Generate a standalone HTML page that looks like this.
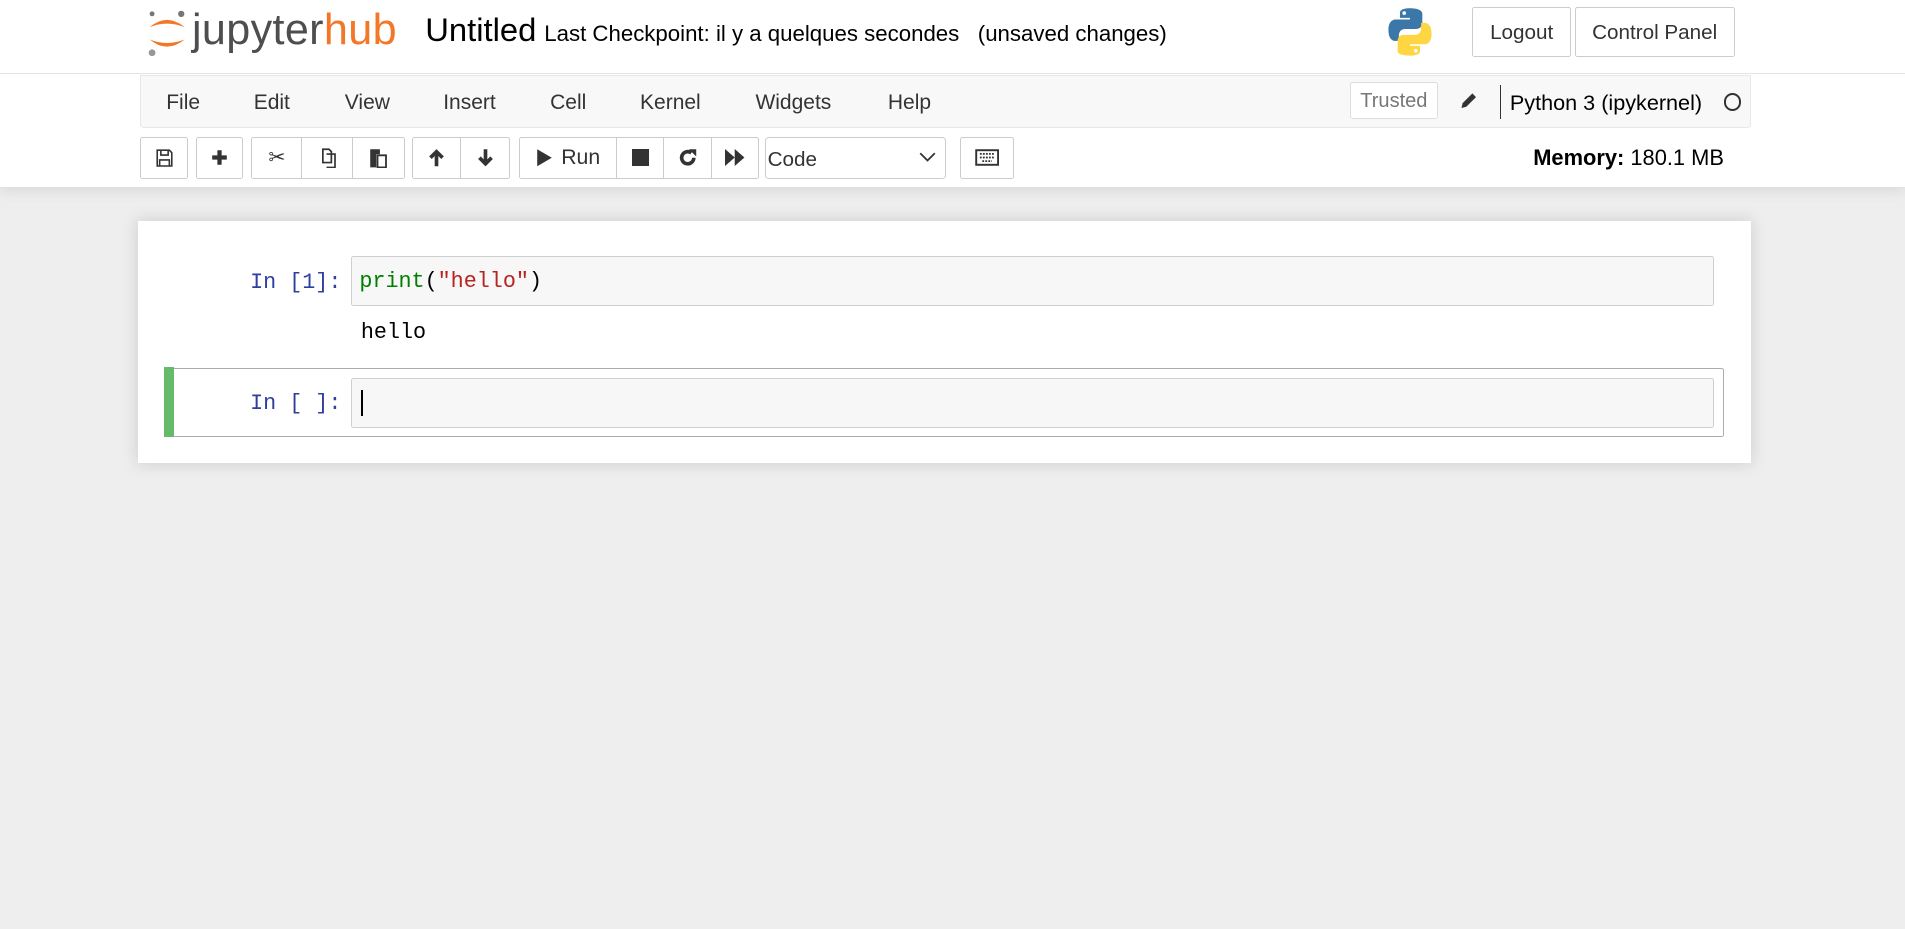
<!DOCTYPE html>
<html><head><meta charset="utf-8"><style>
html,body{margin:0;padding:0;background:#eee;overflow:hidden}
#w{zoom:1.2149;width:1568px;height:765px;position:relative;font-family:"Liberation Sans",Arial,sans-serif;color:#000}
.a{position:absolute}
#hdr{left:0;top:0;width:1568px;height:154px;background:#fff;box-shadow:0 0 12px 1px rgba(87,87,87,0.2)}
#hline{left:0;top:60px;width:1568px;height:1px;background:#e4e4e4}
.btn{position:absolute;border:1px solid #ccc;background:#fff;box-sizing:border-box;border-radius:2px}
.menu{left:115px;top:62px;width:1326px;height:43px;background:#f8f8f8;border:1px solid #e7e7e7;box-sizing:border-box;border-radius:0 0 3px 3px}
.mi{position:absolute;top:10px;font-size:17.3px;color:#333}
.tb{position:absolute;top:113px;height:34px;border:1px solid #ccc;box-sizing:border-box;background:#fff;border-radius:2px;display:flex;align-items:center;justify-content:center;color:#333}
.mono{font-family:"Liberation Mono","DejaVu Sans Mono",monospace;font-size:17.9px}
.inp{position:absolute;left:289px;width:1122px;height:41px;background:#f7f7f7;border:1px solid #cfcfcf;box-sizing:border-box;border-radius:2px}
.pr{position:absolute;color:#303f9f;width:172px;text-align:right;left:109px}
</style></head><body><div id="w">
<div id="hdr" class="a"></div>
<div id="hline" class="a"></div>
<svg class="a" style="left:120px;top:7px" width="36" height="40" viewBox="0 0 36 40">
<circle cx="5" cy="4" r="2" fill="#767677"/><circle cx="29" cy="4" r="2.6" fill="#767677"/><circle cx="5" cy="36" r="2.8" fill="#989798"/>
<path d="M3 15 Q17 3 32 15 Q17 9 3 15Z" fill="#f37726"/><path d="M3 25 Q17 37 32 25 Q17 31 3 25Z" fill="#f37726"/>
</svg>
<div class="a" style="left:158px;top:5px;font-size:35.5px;color:#4e4e4e;letter-spacing:0.3px">jupyter<span style="color:#f37726">hub</span></div>
<div class="a" style="left:350px;top:9px;font-size:27px">Untitled</div>
<div class="a" style="left:448px;top:17px;font-size:18.3px">Last Checkpoint: il y a quelques secondes &nbsp;&nbsp;(unsaved changes)</div>
<svg class="a" style="left:1141px;top:6px" width="40" height="41" viewBox="0 0 40 41">
<path d="M19.5 1C11 1 11.5 4.7 11.5 4.7V9h8.2v1.3H8.2S2 9.6 2 18.9s5.4 9 5.4 9h3.2v-4.4s-.2-5.4 5.3-5.4h8.9s5.1.1 5.1-5V5.7S30.7 1 19.5 1z" fill="#3b77a8"/>
<circle cx="15" cy="5" r="1.5" fill="#fff"/>
<path d="M20 40c8.5 0 8-3.7 8-3.7V32h-8.2v-1.3h11.5s6.2.7 6.2-8.6-5.4-9-5.4-9h-3.2v4.4s.2 5.4-5.3 5.4h-8.9s-5.1-.1-5.1 5v8.4S8.8 40 20 40z" fill="#fed642"/>
<circle cx="24.5" cy="36" r="1.5" fill="#fff"/>
</svg>
<div class="btn" style="left:1212px;top:6px;width:81px;height:41px;font-size:17px;text-align:center;line-height:41px;color:#333">Logout</div>
<div class="btn" style="left:1296px;top:6px;width:132px;height:41px;font-size:17px;text-align:center;line-height:41px;color:#333">Control Panel</div>
<div class="a menu">
<span class="mi" style="left:21px;top:12px">File</span><span class="mi" style="left:93px;top:12px">Edit</span><span class="mi" style="left:168px;top:12px">View</span><span class="mi" style="left:249px;top:12px">Insert</span><span class="mi" style="left:337px;top:12px">Cell</span><span class="mi" style="left:411px;top:12px">Kernel</span><span class="mi" style="left:506px;top:12px">Widgets</span><span class="mi" style="left:615px;top:12px">Help</span>
<div class="btn" style="left:995px;top:5px;width:73px;height:30px;font-size:16.5px;color:#777;text-align:center;line-height:30px;border-color:#ddd">Trusted</div>
<svg class="a" style="left:1085px;top:12px" width="16" height="16" viewBox="0 0 16 16"><path d="M2 14 L3 10 L11 2 L14 5 L6 13 Z" fill="#333"/></svg>
<div class="a" style="left:1119px;top:7px;width:1px;height:28px;background:#333"></div>
<span class="mi" style="left:1127px;top:11px;color:#000;font-size:17.8px">Python 3 (ipykernel)</span>
<div class="a" style="left:1303px;top:14px;width:11px;height:11px;border:2px solid #333;border-radius:50%"></div>
</div>
<div class="tb" style="left:115px;width:40px"><svg width="14" height="15" viewBox="0 0 14 15"><path d="M1 1h10l2 2v11H1z M4 1v4h6V1 M3 9h8v5H3z" fill="none" stroke="#333" stroke-width="1.3"/></svg></div>
<div class="tb" style="left:161px;width:39px"><svg width="14" height="14"><path d="M7 1v12M1 7h12" stroke="#333" stroke-width="3.5"/></svg></div>
<div class="tb" style="left:207px;width:42px;border-radius:2px 0 0 2px"><span style="font-size:17px">✂</span></div>
<div class="tb" style="left:248px;width:43px;border-radius:0"><svg width="16" height="17" viewBox="0 0 16 17"><path d="M4 1h5l2 2v9H4z M7 5h7v11H7" fill="none" stroke="#333" stroke-width="1.4"/></svg></div>
<div class="tb" style="left:290px;width:43px;border-radius:0 2px 2px 0"><svg width="15" height="17" viewBox="0 0 15 17"><path d="M1 1h8v4H6v11H1z" fill="#333"/><path d="M7 6h7v10H7z" fill="#fff" stroke="#333" stroke-width="1.5"/></svg></div>
<div class="tb" style="left:339px;width:41px;border-radius:2px 0 0 2px"><svg width="14" height="16"><path d="M7 15V3M2 8l5-5 5 5" stroke="#333" stroke-width="3" fill="none"/></svg></div>
<div class="tb" style="left:379px;width:41px;border-radius:0 2px 2px 0"><svg width="14" height="16"><path d="M7 1v12M2 8l5 5 5-5" stroke="#333" stroke-width="3" fill="none"/></svg></div>
<div class="tb" style="left:427px;width:81px;border-radius:2px 0 0 2px;font-size:17.5px"><svg width="14" height="16" style="margin-right:7px"><path d="M1 1l12 7-12 7z" fill="#333"/></svg>Run</div>
<div class="tb" style="left:507px;width:40px;border-radius:0"><svg width="14" height="14"><rect width="14" height="14" fill="#333"/></svg></div>
<div class="tb" style="left:546px;width:40px;border-radius:0"><svg width="16" height="16" viewBox="0 0 16 16"><path d="M13 8A5 5 0 1 1 11 4" stroke="#333" stroke-width="3" fill="none"/><path d="M9 1h6v6z" fill="#333"/></svg></div>
<div class="tb" style="left:585px;width:40px;border-radius:0 2px 2px 0"><svg width="16" height="14"><path d="M0 0l8 7-8 7zM8 0l8 7-8 7z" fill="#333"/></svg></div>
<div class="tb" style="left:630px;width:149px;justify-content:space-between;padding:0 8px 0 1px;font-size:17px;color:#333;border-radius:3px"><span style="margin-top:4px">Code</span><svg width="14" height="9"><path d="M1 1l6 6 6-6" stroke="#333" stroke-width="1.5" fill="none"/></svg></div>
<div class="tb" style="left:790px;width:45px"><svg width="20" height="14" viewBox="0 0 20 14"><rect x="1" y="1" width="18" height="12" fill="none" stroke="#333" stroke-width="1.6"/><path d="M4 4h12M4 7h12M6 10h8" stroke="#333" stroke-width="1.4" stroke-dasharray="1.5 1"/></svg></div>
<div class="a" style="left:1262px;top:119px;font-size:18px"><b>Memory:</b> 180.1 MB</div>
<div class="a" style="left:114px;top:182px;width:1327px;height:199px;background:#fff;box-shadow:0 0 12px 1px rgba(87,87,87,0.2)"></div>
<div class="pr mono a" style="top:222px">In [1]:</div>
<div class="inp mono" style="top:211px;padding:10px 0 0 6px"><span style="color:#008000">print</span>(<span style="color:#ba2121">"hello"</span>)</div>
<div class="a mono" style="left:297px;top:263px">hello</div>
<div class="a" style="left:135px;top:303px;width:1284px;height:57px;border:1px solid #ababab;border-left:none;box-sizing:border-box;border-radius:2px"></div>
<div class="a" style="left:135px;top:302px;width:8px;height:58px;background:#66bb6a"></div>
<div class="pr mono a" style="top:322px">In [&nbsp;]:</div>
<div class="inp" style="top:311px"><div class="a" style="left:7px;top:9px;width:2px;height:22px;background:#000"></div></div>
</div></body></html>
